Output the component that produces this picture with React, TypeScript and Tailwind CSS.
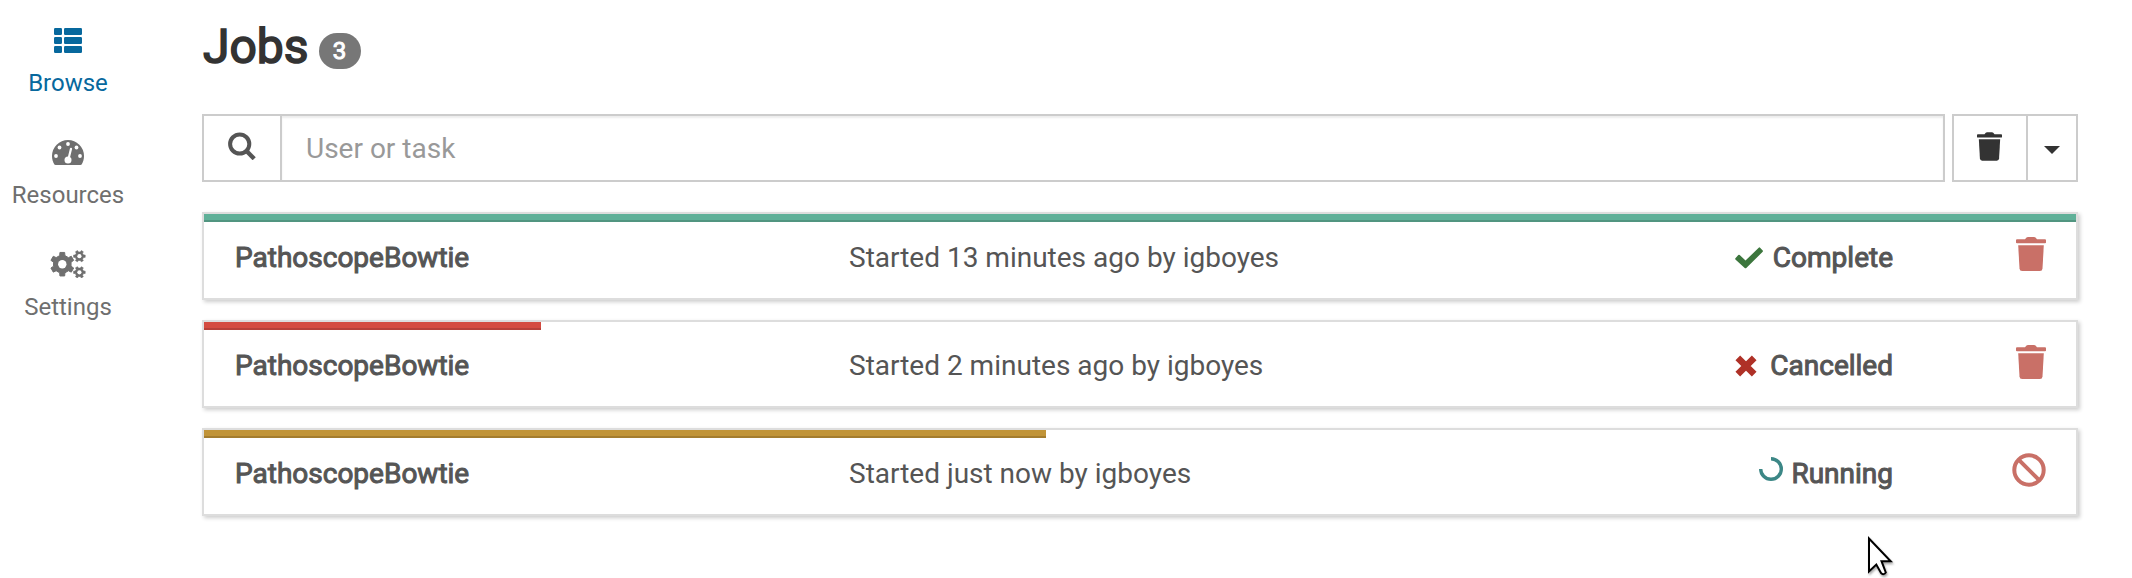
import React from "react";

type IconProps = { className?: string };

const ThListIcon = () => (
  <svg className="h-[26px] w-7" viewBox="0 0 28 26" fill="currentColor">
    {[0, 9, 18].map((y) => (
      <g key={y}>
        <rect x="0" y={y} width="8" height="7" rx="1.2" />
        <rect x="10" y={y} width="18" height="7" rx="1.2" />
      </g>
    ))}
  </svg>
);

const GaugeIcon = () => (
  <svg className="h-[26px] w-8" viewBox="0 0 32 26">
    <path
      d="M16 0A16 16 0 0 0 0 16C0 19 .8 21.700 2.200 24.200Q2.700 25 3.600 25H28.400Q29.300 25 29.800 24.200C31.200 21.700 32 19 32 16A16 16 0 0 0 16 0Z"
      fill="currentColor"
    />
    <g fill="#fff">
      <circle cx="4" cy="16" r="1.9" />
      <circle cx="7.500" cy="7.500" r="1.9" />
      <circle cx="16" cy="4" r="1.9" />
      <circle cx="24.500" cy="7.500" r="1.9" />
      <circle cx="28" cy="16" r="1.9" />
      <circle cx="16" cy="20" r="3.500" />
    </g>
    <path d="M19 8.800 16.500 19" stroke="#fff" strokeWidth="2.200" strokeLinecap="round" />
  </svg>
);

function gear(cx: number, cy: number, outer: number, inner: number, teeth: number, offset: number) {
  const step = (Math.PI * 2) / teeth;
  const points: string[] = [];
  for (let i = 0; i < teeth; i++) {
    const a = offset + i * step;
    const corners: [number, number][] = [
      [inner, -0.28],
      [outer, -0.19],
      [outer, 0.19],
      [inner, 0.28],
    ];
    for (const [r, t] of corners) {
      points.push(`${(cx + r * Math.cos(a + t * step)).toFixed(2)} ${(cy + r * Math.sin(a + t * step)).toFixed(2)}`);
    }
  }
  return `M${points.join("L")}Z`;
}

const CogsIcon = () => (
  <svg className="-mt-[2px] h-7 w-9" viewBox="0 0 36 28" fill="currentColor" stroke="currentColor" strokeLinejoin="round">
    <path d={gear(12.3, 14.2, 12, 9, 6, Math.PI / 2)} strokeWidth="1" />
    <path d={gear(29.4, 6.2, 5.9, 4.3, 6, 0)} strokeWidth=".6" />
    <path d={gear(29.4, 22.3, 5.9, 4.3, 6, 0)} strokeWidth=".6" />
    <g fill="#fff" stroke="none">
      <circle cx="12.3" cy="14.2" r="4.200" />
      <circle cx="29.4" cy="6.2" r="2.100" />
      <circle cx="29.4" cy="22.3" r="2.100" />
    </g>
  </svg>
);

const SearchIcon = () => (
  <svg className="size-7" viewBox="0 0 28 28" fill="none" stroke="currentColor">
    <circle cx="11.700" cy="12" r="9.600" strokeWidth="4" />
    <path d="M18.500 19 26.200 26.700" strokeWidth="4.400" />
  </svg>
);

const TrashIcon = ({ className }: IconProps) => (
  <svg className={className} viewBox="0 0 30 34" fill="currentColor">
    <path d="M1 2.200H9L10.500 .5Q11 0 12 0H18Q19 0 19.500 .5L21 2.200H29Q30 2.200 30 3.200V5.500Q30 6.300 29 6.300H1Q0 6.300 0 5.500V3.200Q0 2.200 1 2.200Z" />
    <path d="M2.200 8.200H27.800L26.500 31.500Q26.300 34 23.800 34H6.200Q3.700 34 3.500 31.500Z" />
  </svg>
);

const CheckIcon = () => (
  <svg className="h-[22px] w-7" viewBox="0 0 28 22" fill="currentColor">
    <path d="M.4 11.200 3.300 8.100Q4 7.500 4.700 8.100L10.500 13.600 23.700.7Q24.400 0 25.100.7L27.700 3.400Q28.300 4.100 27.700 4.800L11.300 20.900Q10.500 21.600 9.700 20.900L.4 12.400Q-.1 11.800.4 11.200Z" />
  </svg>
);

const TimesIcon = () => (
  <svg className="size-[22px]" viewBox="0 0 22 22" fill="none" stroke="currentColor">
    <path d="M2.800 2.800 19.200 19.200M19.200 2.800 2.800 19.200" strokeWidth="6.600" />
  </svg>
);

const SpinnerIcon = () => (
  <svg className="size-6" viewBox="0 0 24 24" fill="none" stroke="#3c8786" strokeWidth="3.4">
    <path d="M12 1.700A10.300 10.300 0 1 1 1.700 12" />
  </svg>
);

const BanIcon = () => (
  <svg className="size-[34px]" viewBox="0 0 34 34" fill="none" stroke="currentColor" strokeWidth="4">
    <circle cx="17" cy="17" r="14.700" />
    <path d="M6.600 6.600 27.400 27.400" />
  </svg>
);

const Cursor = () => (
  <svg
    className="absolute left-[1867px] top-[534px] h-11 w-8 drop-shadow-[1px_2px_1px_rgba(0,0,0,0.35)]"
    viewBox="0 0 32 44"
  >
    <path
      d="M2 4.500V37.500L9.300 30.500 14 39Q16.500 41.500 18.800 38.500L14.500 27.200H23.700Z"
      fill="#fff"
      stroke="#000"
      strokeWidth="2"
    />
  </svg>
);

const nav = [
  { label: "Browse", icon: <ThListIcon />, active: true },
  { label: "Resources", icon: <GaugeIcon />, active: false },
  { label: "Settings", icon: <CogsIcon />, active: false },
];

const jobs = [
  {
    started: "Started 13 minutes ago by igboyes",
    state: "Complete",
    progress: 100,
    bar: "bg-[#5fb098] border-[#519580]",
    stateIcon: <span className="mr-[10px] text-[#3c763d]"><CheckIcon /></span>,
    action: <TrashIcon className="h-[34px] w-[30px]" />,
  },
  {
    started: "Started 2 minutes ago by igboyes",
    state: "Cancelled",
    progress: 18,
    bar: "bg-[#d44b40] border-[#b64038]",
    stateIcon: <span className="mr-[13px] text-[#af3127]"><TimesIcon /></span>,
    action: <TrashIcon className="h-[34px] w-[30px]" />,
  },
  {
    started: "Started just now by igboyes",
    state: "Running",
    progress: 45,
    bar: "bg-[#c19438] border-[#a47d2f]",
    stateIcon: <span className="mr-2 -mt-[10px]"><SpinnerIcon /></span>,
    action: <BanIcon />,
  },
];

export default function App() {
  return (
    <div className="relative flex h-[578px] w-[2132px] overflow-hidden bg-white font-['Roboto',sans-serif] text-[28px] leading-10 text-[#555]">
      <nav className="flex w-[136px] flex-col">
        {nav.map((item) => (
          <a
            key={item.label}
            className={`flex h-28 flex-col items-center pt-7 text-2xl leading-[34px] ${item.active ? "text-[#07689d]" : "text-[#6f6f6f]"}`}
          >
            <span className="flex h-[38px] items-start">{item.icon}</span>
            {item.label}
          </a>
        ))}
      </nav>

      <main className="ml-[66px] flex w-[1876px] flex-col">
        <header className="flex h-[114px] items-start text-[#333]">
          <h1 className="ml-px mt-[19px] text-[48px] leading-[56px] [-webkit-text-stroke:1.6px_currentColor]">Jobs</h1>
          <span className="ml-[10px] mt-[33px] flex h-9 w-[42px] items-center justify-center rounded-full bg-[#777] text-2xl text-white [-webkit-text-stroke:1px_currentColor]">
            3
          </span>
        </header>

        <div className="flex h-[68px] gap-[7px]">
          <div className="flex w-[1743px] border-2 border-[#ccc]">
            <div className="flex w-[78px] justify-center border-r-2 border-[#ccc] pt-4">
              <SearchIcon />
            </div>
            <div className="flex flex-1 items-center pl-6 pt-[2px] text-[#999] shadow-[inset_0_2px_2px_rgba(0,0,0,0.075)]">
              User or task
            </div>
          </div>
          <div className="flex w-[126px] border-2 border-[#ccc] text-[#333]">
            <div className="flex w-[74px] justify-center border-r-2 border-[#ccc] pr-px pt-4">
              <TrashIcon className="h-[29px] w-[25px]" />
            </div>
            <div className="flex flex-1 items-center justify-center pt-1">
              <svg className="h-2 w-4" viewBox="0 0 16 8" fill="currentColor">
                <path d="M0 0H16L8 8Z" />
              </svg>
            </div>
          </div>
        </div>

        <div className="mt-[30px] flex flex-col gap-5">
          {jobs.map((job) => (
            <div
              key={job.state}
              className="flex h-[88px] flex-col border-2 border-[#ddd] shadow-[2px_2px_4px_rgba(0,0,0,0.2)]"
            >
              <div className="h-2">
                <div className={`h-2 border-b-2 ${job.bar}`} style={{ width: `${job.progress}%` }} />
              </div>
              <div className="flex h-[72px] items-start pl-[31px] pr-[30px] pt-[15px]">
                <div className="mt-px w-[614px] [-webkit-text-stroke:1px_currentColor]">PathoscopeBowtie</div>
                <div className="mt-px w-[600px]">{job.started}</div>
                <div className="mt-px flex w-[444px] items-center justify-end [-webkit-text-stroke:1px_currentColor]">
                  {job.stateIcon}
                  {job.state}
                </div>
                <div className="flex flex-1 justify-end text-[#c97067]">{job.action}</div>
              </div>
            </div>
          ))}
        </div>
      </main>
      <Cursor />
    </div>
  );
}
